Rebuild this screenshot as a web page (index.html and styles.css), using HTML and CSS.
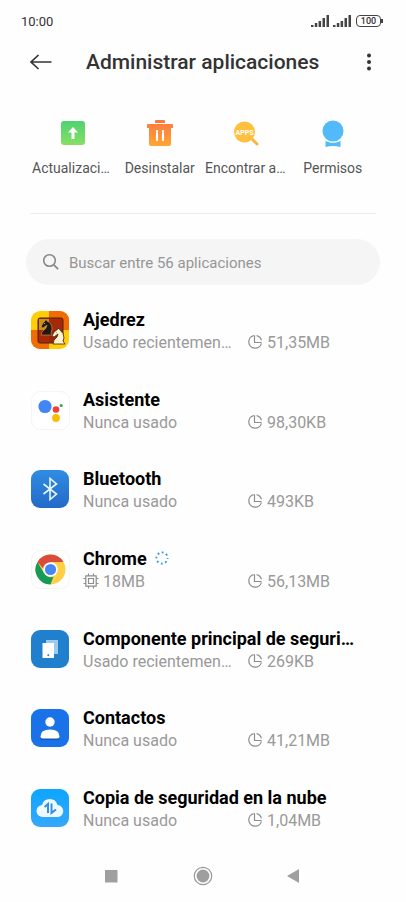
FILE: index.html
```
<!DOCTYPE html>
<html lang="es">
<head>
    <meta charset="UTF-8">
    <meta name="viewport" content="width=device-width, initial-scale=1.0">
    <title>Administrar aplicaciones</title>
    <link rel="stylesheet" href="styles.css">
</head>
<body>
    <!-- Shared icons -->
    <svg class="sprite" aria-hidden="true">
        <symbol id="signal" viewBox="0 0 18 12">
            <path d="M0 10h2.500v2H0zM3.800 8h2.500v4H3.800zM7.600 6h2.500v6H7.600zM11.500 3H14v9h-2.500zM15.500 0H18v12h-2.500z"/>
        </symbol>
        <symbol id="storage" viewBox="0 0 16 16">
            <path d="M6.600 1.600A6.400 6.400 0 1 0 14.400 9.400M7.500 1.200V8.500H14.600M9.600 1.600A6.500 6.500 0 0 1 14.400 6.400" fill="none" stroke="#8c8c8c" stroke-width="1.200"/>
        </symbol>
    </svg>

    <div class="status-bar">
        <span>10:00</span>
        <div class="status-icons">
            <svg class="signal" width="18" height="12"><use href="#signal"/></svg>
            <svg class="signal" width="18" height="12"><use href="#signal"/></svg>
            <span class="battery">100</span>
        </div>
    </div>

    <header class="header">
        <button class="back-btn" aria-label="Atrás">
            <svg width="24" height="18" viewBox="0 0 24 18"><path d="M9.500 2L2 9l7.500 7M2 9h20.500" fill="none" stroke="#333" stroke-width="1.700"/></svg>
        </button>
        <h1>Administrar aplicaciones</h1>
        <button class="more-btn" aria-label="Más opciones">
            <svg width="24" height="18" viewBox="0 0 24 18" fill="#333"><circle cx="12" cy="2.500" r="2"/><circle cx="12" cy="9" r="2"/><circle cx="12" cy="15.500" r="2"/></svg>
        </button>
    </header>

    <nav class="tools">
        <a href="#">
            <svg width="28" height="28" viewBox="0 0 28 28">
                <defs><linearGradient id="green" x2="0" y2="1"><stop offset="0" stop-color="#50d271"/><stop offset="1" stop-color="#86df64"/></linearGradient></defs>
                <rect x="2" y="2" width="24" height="24" rx="3" fill="url(#green)"/>
                <path d="M14 8l5 5.500h-3.500V20h-3v-6.500H9z" fill="#fff"/>
            </svg>
            <span>Actualizaciones</span>
        </a>
        <a href="#">
            <svg width="28" height="28" viewBox="0 0 28 28">
                <defs><linearGradient id="orange" x2="0" y2="1"><stop offset="0" stop-color="#ff7541"/><stop offset="1" stop-color="#ffa634"/></linearGradient></defs>
                <path d="M10 1h8q1 0 1 1v2H9V2q0-1 1-1zM2 5h24q1 0 1 1v3h-2v16q0 2-2 2H5q-2 0-2-2V9H1V6q0-1 1-1z" fill="url(#orange)"/>
                <path d="M11 11v11M17 11v11" stroke="#fff" stroke-width="2"/>
            </svg>
            <span>Desinstalar</span>
        </a>
        <a href="#">
            <svg width="28" height="28" viewBox="0 0 28 28">
                <path d="M19 19l6 6" stroke="#f9b53c" stroke-width="3" stroke-linecap="round"/>
                <circle cx="12.500" cy="13" r="10.500" fill="#ffc13d"/>
                <text class="apps-text" x="12.500" y="15.500" text-anchor="middle">APPS</text>
            </svg>
            <span>Encontrar aplicaciones</span>
        </a>
        <a href="#">
            <svg width="28" height="28" viewBox="0 0 28 28">
                <path d="M6.500 22q7.500 3 15 0v6q-7.500-2-15 0z" fill="#52bafa"/>
                <circle cx="14" cy="12" r="11.500" fill="#fefefe"/>
                <circle cx="14" cy="12" r="10.500" fill="#52bafa"/>
            </svg>
            <span>Permisos</span>
        </a>
    </nav>

    <label class="search">
        <svg width="18" height="18" viewBox="0 0 18 18"><circle cx="7.500" cy="7.500" r="5.800" fill="none" stroke="#888" stroke-width="1.600"/><path d="M11.800 11.800l4.400 4.400" stroke="#888" stroke-width="1.700"/></svg>
        <input type="text" placeholder="Buscar entre 56 aplicaciones" aria-label="Buscar aplicaciones">
    </label>

    <ul class="app-list">
        <li>
            <svg class="app-icon" viewBox="0 0 40 40">
                <clipPath id="tile"><rect x="1" y="1" width="38" height="38" rx="9"/></clipPath>
                <g clip-path="url(#tile)">
                    <path d="M0 0h40v40H0z" fill="#ffce05"/>
                    <path d="M19 0h21v20H19zM0 20h19v20H0z" fill="#f06c04"/>
                    <rect x="8" y="8" width="25" height="25" rx="2" fill="#a52b08" stroke="#51210b"/>
                    <path d="M9 9h10v11H9z" fill="#d49009"/>
                    <path d="M19 20h13v12H19z" fill="#9b2607"/>
                </g>
                <path d="M11 25l1-3 4-4 1-3-4 3-2-1 2-4 2-2 1-2 1 2q5 2 5 8l-1 4 1 2z" fill="#211813" stroke="#e5b26b" stroke-width=".5"/>
                <path d="M23 34l1-4 3-3 1-3-4 3-2-1 2-4 4-3 1-1 1 2q4 3 4 8l-1 3 2 3z" fill="#fff2cc" stroke="#3d251b" stroke-width=".8"/>
                <path d="M14 13l1 1M26 22l1 1" stroke="#b9a080"/>
            </svg>
            <div class="app-info">
                <h2>Ajedrez</h2>
                <div class="meta">
                    <span class="usage">Usado recientemente</span>
                    <span class="size"><svg width="16" height="16"><use href="#storage"/></svg>51,35MB</span>
                </div>
            </div>
        </li>
        <li>
            <svg class="app-icon" viewBox="0 0 40 40">
                <rect x="1.500" y="1.500" width="38" height="38" rx="9" fill="#fff" stroke="#f5f5f5"/>
                <circle cx="15" cy="16.500" r="6.600" fill="#4285f4"/>
                <circle cx="26" cy="19.500" r="3.300" fill="#ea4335"/>
                <circle cx="31.200" cy="15.500" r="1.600" fill="#34a853"/>
                <circle cx="26" cy="28" r="3.900" fill="#fbbc05"/>
            </svg>
            <div class="app-info">
                <h2>Asistente</h2>
                <div class="meta">
                    <span class="usage">Nunca usado</span>
                    <span class="size"><svg width="16" height="16"><use href="#storage"/></svg>98,30KB</span>
                </div>
            </div>
        </li>
        <li>
            <svg class="app-icon" viewBox="0 0 40 40">
                <defs><linearGradient id="blue" x2="0" y2="1"><stop offset="0" stop-color="#308de2"/><stop offset="1" stop-color="#2369c9"/></linearGradient></defs>
                <rect x="1" y="1" width="38" height="38" rx="9" fill="url(#blue)"/>
                <path d="M13.500 15l13 10-6.500 5.500v-21l6.500 5.500-13 10" fill="none" stroke="#e8f7ff" stroke-width="1.600"/>
            </svg>
            <div class="app-info">
                <h2>Bluetooth</h2>
                <div class="meta">
                    <span class="usage">Nunca usado</span>
                    <span class="size"><svg width="16" height="16"><use href="#storage"/></svg>493KB</span>
                </div>
            </div>
        </li>
        <li>
            <svg class="app-icon" viewBox="0 0 40 40">
                <rect x="1.500" y="1.500" width="38" height="38" rx="9" fill="#fff" stroke="#f5f5f5"/>
                <circle cx="20.500" cy="20.500" r="15" fill="#ffcf45"/>
                <path d="M7.500 13a15 15 0 0 1 26 0H20.500v15z" fill="#db4b3d"/>
                <path d="M7.500 13L14 24.300a7.500 7.500 0 0 0 9.500 3.200L20.500 35.500A15 15 0 0 1 7.500 13z" fill="#159b58"/>
                <circle cx="20.500" cy="20.500" r="7.300" fill="#fff"/>
                <circle cx="20.500" cy="20.500" r="5.600" fill="#4688f1"/>
            </svg>
            <div class="app-info">
                <h2>Chrome <svg width="14" height="14" viewBox="0 0 14 14"><circle cx="7" cy="7" r="5.600" fill="none" stroke="#2799df" stroke-width="1.800" stroke-dasharray="1.800 2.598" stroke-dashoffset=".9"/></svg></h2>
                <div class="meta">
                    <span class="usage"><svg width="16" height="16" viewBox="0 0 16 16"><path d="M2.800 2.800h10.400v10.400H2.800zM5.500 5.500h5v5h-5zM5.500 .5v2M10.500 .5v2M5.500 13.500v2M10.500 13.500v2M.5 5.500h2M.5 10.500h2M13.500 5.500h2M13.500 10.500h2" fill="none" stroke="#8c8c8c" stroke-width="1.200"/></svg>18MB</span>
                    <span class="size"><svg width="16" height="16"><use href="#storage"/></svg>56,13MB</span>
                </div>
            </div>
        </li>
        <li>
            <svg class="app-icon" viewBox="0 0 40 40">
                <rect x="1" y="1" width="38" height="38" rx="9" fill="#2180cd"/>
                <path d="M16 11h12v14H16z" fill="#9dcbed"/>
                <path d="M12.500 14H24v15H12.500z" fill="#fff"/>
                <circle cx="18.300" cy="26.300" r="1" fill="#2180cd"/>
            </svg>
            <div class="app-info">
                <h2>Componente principal de seguridad</h2>
                <div class="meta">
                    <span class="usage">Usado recientemente</span>
                    <span class="size"><svg width="16" height="16"><use href="#storage"/></svg>269KB</span>
                </div>
            </div>
        </li>
        <li>
            <svg class="app-icon" viewBox="0 0 40 40">
                <rect x="1" y="1" width="38" height="38" rx="9" fill="#1a72e8"/>
                <path d="M10.500 30.500q0-7.500 9.500-7.500t9.500 7.500q0 1.500-1.500 1.500H12q-1.500 0-1.500-1.500z" fill="#1557b8"/>
                <circle cx="20" cy="14" r="4.700" fill="#fff"/>
                <path d="M10.500 28.500q0-7 9.500-7t9.500 7q0 2-2 2h-15q-2 0-2-2z" fill="#fff"/>
            </svg>
            <div class="app-info">
                <h2>Contactos</h2>
                <div class="meta">
                    <span class="usage">Nunca usado</span>
                    <span class="size"><svg width="16" height="16"><use href="#storage"/></svg>41,21MB</span>
                </div>
            </div>
        </li>
        <li>
            <svg class="app-icon" viewBox="0 0 40 40">
                <defs><linearGradient id="sky" x2="0" y2="1"><stop offset="0" stop-color="#0da5ff"/><stop offset="1" stop-color="#35a8fb"/></linearGradient></defs>
                <rect x="1" y="1" width="38" height="38" rx="9" fill="url(#sky)"/>
                <path d="M13 29a6 6 0 0 1-1-12 8 8 0 0 1 15.500 0 6 6 0 0 1-.5 12z" fill="#eef9ff"/>
                <path d="M14.500 19l3.500-3v9M21.500 15.500V25l4.500-3.500" fill="none" stroke="#358fdf" stroke-width="2"/>
            </svg>
            <div class="app-info">
                <h2>Copia de seguridad en la nube</h2>
                <div class="meta">
                    <span class="usage">Nunca usado</span>
                    <span class="size"><svg width="16" height="16"><use href="#storage"/></svg>1,04MB</span>
                </div>
            </div>
        </li>
    </ul>

    <footer class="nav-bar">
        <button aria-label="Recientes"><svg width="20" height="20" viewBox="0 0 20 20"><rect x="4" y="4" width="12.500" height="12.500" fill="#9f9f9f"/></svg></button>
        <button aria-label="Inicio"><svg width="20" height="20" viewBox="0 0 20 20"><circle cx="10" cy="10" r="8.700" fill="none" stroke="#999" stroke-width="1.200"/><circle cx="10" cy="10" r="6.400" fill="#9f9f9f"/></svg></button>
        <button aria-label="Atrás"><svg width="20" height="20" viewBox="0 0 20 20"><path d="M3 10l12-7v14z" fill="#9f9f9f"/></svg></button>
    </footer>
</body>
</html>
```
FILE: styles.css
```
* {
    box-sizing: border-box;
}
body {
    display: flex;
    flex-direction: column;
    min-height: 100vh;
    margin: 0;
    font-family: Roboto, sans-serif;
    background-color: #fefefe;
    color: #333;
}
svg {
    flex-shrink: 0;
}
button {
    padding: 0;
    border: none;
    background: none;
    cursor: pointer;
}
button svg {
    display: block;
}
.sprite {
    position: absolute;
    width: 0;
    height: 0;
}

/* Status bar */
.status-bar {
    display: flex;
    align-items: center;
    justify-content: space-between;
    height: 42px;
    padding: 0 25px 0 21px;
    font-size: 13px;
}
.status-icons {
    display: flex;
    align-items: center;
    gap: 4px;
}
.signal {
    fill: #444;
}
.battery {
    position: relative;
    width: 25px;
    margin-left: 1px;
    border: 1px solid #444;
    border-radius: 4px;
    font-size: 9px;
    font-weight: 500;
    line-height: 10px;
    text-align: center;
}
.battery::after {
    content: "";
    position: absolute;
    top: 3px;
    right: -3px;
    width: 2px;
    height: 4px;
    background-color: #444;
}

/* Header */
.header {
    display: flex;
    align-items: center;
    height: 40px;
    padding: 0 25px 0 29px;
}
.header h1 {
    margin: 0;
    font-size: 21px;
    font-weight: 500;
}
.back-btn {
    margin-right: 33px;
}
.more-btn {
    margin-left: auto;
}

/* Shortcuts */
.tools {
    display: grid;
    grid-template-columns: repeat(4, 1fr);
    margin: 0 30px;
    padding: 37px 0 35px;
    border-bottom: 1px solid #ececec;
}
.tools a {
    display: flex;
    flex-direction: column;
    align-items: center;
    gap: 11px;
    min-width: 0;
    padding: 0 2px;
    color: #555;
    font-size: 14px;
    line-height: 20px;
    text-align: center;
    text-decoration: none;
}
.tools span {
    max-width: 100%;
    overflow: hidden;
    text-overflow: ellipsis;
    white-space: nowrap;
}
.apps-text {
    fill: #fff;
    font-size: 7px;
    font-weight: 700;
}

/* Search */
.search {
    display: flex;
    align-items: center;
    gap: 9px;
    height: 46px;
    margin: 25px 26px 5px;
    padding: 0 16px;
    border-radius: 23px;
    background-color: #f5f5f5;
}
.search input {
    flex: 1;
    min-width: 0;
    padding: 2px 0 0;
    border: none;
    outline: none;
    background: none;
    font-family: inherit;
    font-size: 15px;
}
.search input::placeholder {
    color: #959595;
}

/* Applications */
.app-list {
    display: flex;
    flex: 1;
    flex-direction: column;
    margin: 0;
    padding: 0;
    list-style: none;
}
.app-list li {
    display: flex;
    flex: 1;
    align-items: center;
    gap: 13px;
    padding: 0 46px 0 30px;
}
.app-icon {
    width: 40px;
    height: 40px;
}
.app-info {
    flex: 1;
    min-width: 0;
    padding-top: 2px;
}
.app-info h2 {
    margin: 0;
    overflow: hidden;
    color: #000;
    font-size: 18px;
    font-weight: 700;
    line-height: 24px;
    text-overflow: ellipsis;
    white-space: nowrap;
}
.app-info h2 svg {
    margin-left: 4px;
}
.meta {
    display: grid;
    grid-template-columns: 150px 1fr;
    gap: 14px;
    color: #999;
    font-size: 16px;
    line-height: 22px;
}
.usage {
    overflow: hidden;
    text-overflow: ellipsis;
    white-space: nowrap;
}
.meta svg {
    margin-right: 4px;
    vertical-align: -2px;
}

/* Navigation bar */
.nav-bar {
    display: flex;
    align-items: center;
    justify-content: space-between;
    height: 54px;
    padding: 2px 102px 0 101px;
}
```
